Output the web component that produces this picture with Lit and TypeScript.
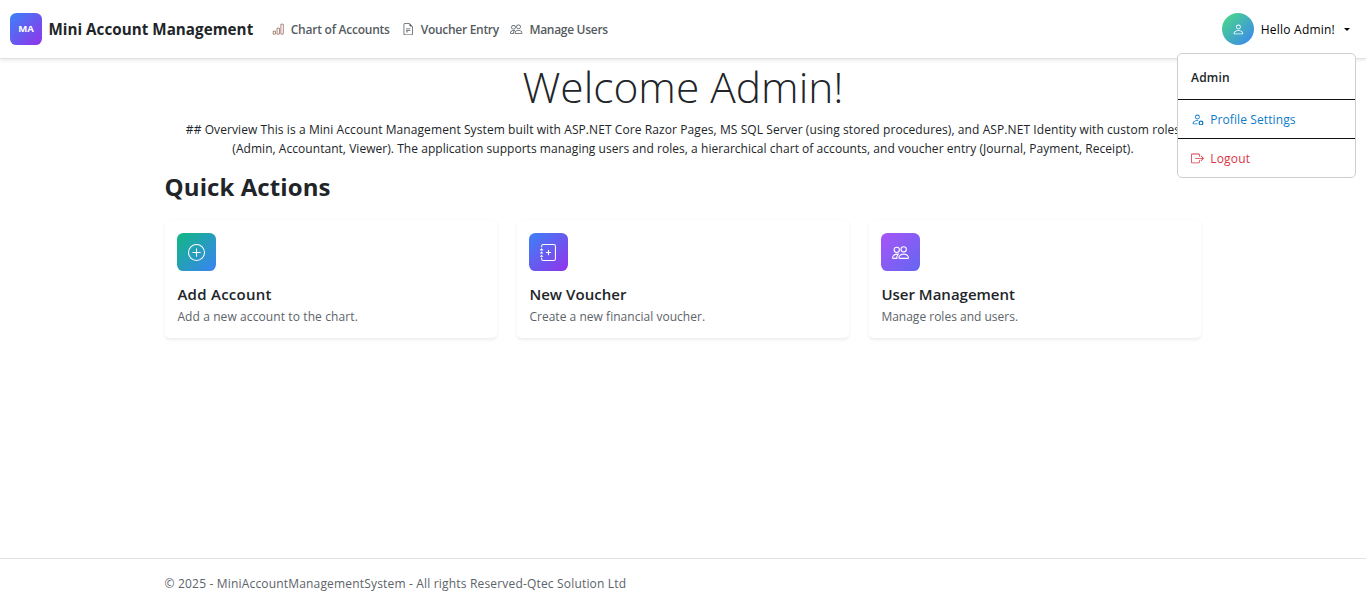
import { LitElement, html, css, svg } from "lit";
import { customElement, property } from "lit/decorators.js";

const ICONS: Record<string, string[]> = {
  chart: ["M4 11H2v3h2zm5-4H7v7h2zm5-5v12h-2V2zm-2-1a1 1 0 0 0-1 1v12a1 1 0 0 0 1 1h2a1 1 0 0 0 1-1V2a1 1 0 0 0-1-1zM6 7a1 1 0 0 1 1-1h2a1 1 0 0 1 1 1v7a1 1 0 0 1-1 1H7a1 1 0 0 1-1-1zm-5 4a1 1 0 0 1 1-1h2a1 1 0 0 1 1 1v3a1 1 0 0 1-1 1H2a1 1 0 0 1-1-1z"],
  file: [
    "M5.5 7a.5.5 0 0 0 0 1h5a.5.5 0 0 0 0-1zM5 9.5a.5.5 0 0 1 .5-.5h5a.5.5 0 0 1 0 1h-5a.5.5 0 0 1-.5-.5m0 2a.5.5 0 0 1 .5-.5h2a.5.5 0 0 1 0 1h-2a.5.5 0 0 1-.5-.5",
    "M9.5 0H4a2 2 0 0 0-2 2v12a2 2 0 0 0 2 2h8a2 2 0 0 0 2-2V4.500zm0 1v2A1.5 1.5 0 0 0 11 4.500h2V14a1 1 0 0 1-1 1H4a1 1 0 0 1-1-1V2a1 1 0 0 1 1-1z",
  ],
  people: ["M15 14s1 0 1-1-1-4-5-4-5 3-5 4 1 1 1 1zm-7.978-1L7 12.996c.001-.264.167-1.03.76-1.72C8.312 10.629 9.282 10 11 10c1.717 0 2.687.63 3.24 1.276.593.69.758 1.457.76 1.72l-.008.002-.014.002zM11 7a2 2 0 1 0 0-4 2 2 0 0 0 0 4m3-2a3 3 0 1 1-6 0 3 3 0 0 1 6 0M6.936 9.28a6 6 0 0 0-1.23-.247A7 7 0 0 0 5 9c-4 0-5 3-5 4q0 1 1 1h4.216A2.24 2.24 0 0 1 5 13c0-1.01.377-2.042 1.09-2.904.243-.294.526-.569.846-.816M4.92 10A5.5 5.5 0 0 0 4 13H1c0-.26.164-1.03.76-1.724.545-.636 1.492-1.256 3.16-1.275ZM1.5 5.500a3 3 0 1 1 6 0 3 3 0 0 1-6 0m3-2a2 2 0 1 0 0 4 2 2 0 0 0 0-4"],
  person: ["M8 8a3 3 0 1 0 0-6 3 3 0 0 0 0 6m2-3a2 2 0 1 1-4 0 2 2 0 0 1 4 0m4 8c0 1-1 1-1 1H3s-1 0-1-1 1-4 6-4 6 3 6 4m-1-.004c-.001-.246-.154-.986-.832-1.664C11.516 10.68 10.289 10 8 10s-3.516.68-4.168 1.332c-.678.678-.83 1.418-.832 1.664z"],
  gear: ["M11 5a3 3 0 1 1-6 0 3 3 0 0 1 6 0M8 7a2 2 0 1 0 0-4 2 2 0 0 0 0 4m.256 7a4.500 4.500 0 0 1-.229-1.004H3c.001-.246.154-.986.832-1.664C4.484 10.68 5.711 10 8 10q.39 0 .74.025c.226-.341.496-.65.804-.918Q8.844 9.002 8 9c-5 0-6 3-6 4s1 1 1 1zm3.630-4.540c.18-.613 1.048-.613 1.229 0l.043.148a.64.64 0 0 0 .921.382l.136-.074c.561-.306 1.175.308.87.869l-.075.136a.64.64 0 0 0 .382.92l.149.045c.612.18.612 1.048 0 1.229l-.15.043a.64.64 0 0 0-.38.921l.074.136c.305.561-.309 1.175-.87.87l-.136-.075a.64.64 0 0 0-.92.382l-.045.149c-.18.612-1.048.612-1.229 0l-.043-.15a.64.64 0 0 0-.921-.38l-.136.074c-.561.305-1.175-.309-.87-.87l.075-.136a.64.64 0 0 0-.382-.92l-.148-.045c-.613-.18-.613-1.048 0-1.229l.148-.043a.64.64 0 0 0 .382-.921l-.074-.136c-.306-.561.308-1.175.869-.87l.136.075a.64.64 0 0 0 .92-.382zM14 12.500a1.500 1.500 0 1 0-3 0 1.500 1.500 0 0 0 3 0"],
  logout: [
    "M10 12.5a.5.5 0 0 1-.5.5h-8a.5.5 0 0 1-.5-.5v-9a.5.5 0 0 1 .5-.5h8a.5.5 0 0 1 .5.5v2a.5.5 0 0 0 1 0v-2A1.5 1.5 0 0 0 9.5 2h-8A1.5 1.5 0 0 0 0 3.5v9A1.5 1.5 0 0 0 1.5 14h8a1.5 1.5 0 0 0 1.5-1.5v-2a.5.5 0 0 0-1 0z",
    "M15.854 8.354a.5.5 0 0 0 0-.708l-3-3a.5.5 0 0 0-.708.708L14.293 7.5H5.5a.5.5 0 0 0 0 1h8.793l-2.147 2.146a.5.5 0 0 0 .708.708z",
  ],
  plus: [
    "M8 15A7 7 0 1 1 8 1a7 7 0 0 1 0 14m0 1A8 8 0 1 0 8 0a8 8 0 0 0 0 16",
    "M8 4a.5.5 0 0 1 .5.5v3h3a.5.5 0 0 1 0 1h-3v3a.5.5 0 0 1-1 0v-3h-3a.5.5 0 0 1 0-1h3v-3A.5.5 0 0 1 8 4",
  ],
  journal: [
    "M8 5.5a.5.5 0 0 1 .5.5v1.5H10a.5.5 0 0 1 0 1H8.5V10a.5.5 0 0 1-1 0V8.5H6a.5.5 0 0 1 0-1h1.5V6a.5.5 0 0 1 .5-.5",
    "M3 0h10a2 2 0 0 1 2 2v12a2 2 0 0 1-2 2H3a2 2 0 0 1-2-2v-1h1v1a1 1 0 0 0 1 1h10a1 1 0 0 0 1-1V2a1 1 0 0 0-1-1H3a1 1 0 0 0-1 1v1H1V2a2 2 0 0 1 2-2",
    "M1 5v-.5a.5.5 0 0 1 1 0V5h.5a.5.5 0 0 1 0 1h-2a.5.5 0 0 1 0-1zm0 3v-.5a.5.5 0 0 1 1 0V8h.5a.5.5 0 0 1 0 1h-2a.5.5 0 0 1 0-1zm0 3v-.5a.5.5 0 0 1 1 0v.5h.5a.5.5 0 0 1 0 1h-2a.5.5 0 0 1 0-1z",
  ],
};

@customElement("app-icon")
class AppIcon extends LitElement {
  @property() name = "";
  static styles = css`
    :host { display: block; flex: none; width: 12.8px; height: 12.8px; }
    svg { display: block; width: 100%; height: 100%; }
  `;
  render() {
    return html`<svg viewBox="0 0 16 16" fill="currentColor" aria-hidden="true">
      ${(ICONS[this.name] ?? []).map((d) => svg`<path d=${d}></path>`)}
    </svg>`;
  }
}

@customElement("app-root")
class AppRoot extends LitElement {
  static styles = css`
    :host {
      display: flex; flex-direction: column; height: 605px; overflow: hidden;
      background: #fff; color: #212529;
      font: 400 12px/19.2px "Open Sans", "Noto Sans", sans-serif;
    }
    .t { white-space: nowrap; }
    .navbar {
      position: relative; z-index: 2; flex: none; box-sizing: border-box; height: 59px;
      display: flex; align-items: center; padding: 0 16px 0 10px;
      border-bottom: 1px solid #dee2e6; background: #fff;
      box-shadow: 0 2px 3px rgba(0, 0, 0, 0.07);
    }
    .logo {
      width: 32px; height: 32px; border-radius: 6.4px; display: grid; place-items: center;
      background: linear-gradient(135deg, #3b82f6, #9333ea);
      color: #fff; font-size: 9.6px; font-weight: 700; line-height: 1;
    }
    .brand { margin-left: 6.4px; font-size: 15.200px; font-weight: 700; padding-top: 1px; letter-spacing: 0.03px; }
    .links { display: flex; margin-left: 18.500px; }
    .link { display: flex; align-items: center; gap: 6.600px; color: #555b61; font-weight: 600; letter-spacing: -0.24px; }
    .link .t { padding-top: 2px; }
    .link app-icon { width: 12.400px; height: 12.400px; }
    .accounts { width: 130px; }
    .accounts app-icon { color: #96645c; }
    .voucher { width: 108.700px; letter-spacing: -0.29px; }
    .users { letter-spacing: -0.3px; }
    .user { margin-left: auto; display: flex; align-items: center; color: #000; letter-spacing: 0.22px; }
    .user .t { padding-top: 1px; }
    .avatar {
      width: 32px; height: 32px; border-radius: 50%; display: grid; place-items: center;
      background: linear-gradient(135deg, #4ade80, #3b82f6); color: #fff; margin-right: 6.4px;
    }
    .caret { margin-left: 9px; border: 3.6px solid transparent; border-top-color: #000; border-bottom: 0; }
    .menu {
      position: absolute; top: 53px; right: 10px; width: 179px; height: 125px; box-sizing: border-box;
      display: flex; flex-direction: column; background: #fff;
      border: 1px solid #ccced0; border-radius: 5px;
    }
    .item { display: flex; align-items: center; gap: 6.4px; height: 38px; padding: 0 13px; letter-spacing: 0.1px; }
    .item .t { padding-top: 2px; }
    .item + .item { border-top: 1px solid #111; }
    .head { height: 45px; font-weight: 600; padding-top: 1px; box-sizing: border-box; letter-spacing: 0.2px; }
    .profile { color: #0d7bc8; }
    .logout { color: #dc3545; letter-spacing: 0.2px; }
    main { flex: 1; width: 1036.8px; margin: 0 auto; }
    h1 { margin: 7px 0 0; font-size: 42.500px; line-height: 42px; font-weight: 300; text-align: center; }
    .overview { margin: 12px 0 0; text-align: center; }
    .first { letter-spacing: 0.083px; }
    .second { letter-spacing: 0.04px; }
    h2 { margin: 11px 0 0; font-size: 24px; line-height: 36px; font-weight: 700; letter-spacing: 0.08px; }
    .cards { display: grid; grid-template-columns: repeat(3, 1fr); gap: 19.2px; margin-top: 15px; }
    .card { height: 118px; box-sizing: border-box; padding: 12.8px; border-radius: 5px; box-shadow: 0 1.6px 3.2px rgba(0, 0, 0, 0.075); }
    .tile { width: 38.4px; height: 38px; border-radius: 6.4px; display: grid; place-items: center; color: #fff; }
    .tile app-icon { width: 17px; height: 17px; }
    .green { background: linear-gradient(135deg, #10b981, #3b82f6); }
    .blue { background: linear-gradient(135deg, #3b82f6, #9333ea); }
    .purple { background: linear-gradient(135deg, #a855f7, #6366f1); }
    h3 { margin: 13px 0 0; font-size: 15px; line-height: 20px; font-weight: 600; }
    .desc { margin: 3px 0 0; color: #5c6369; }
    .green ~ h3 { letter-spacing: 0.27px; }
    .green ~ .desc { letter-spacing: 0.1px; }
    .blue ~ h3 { letter-spacing: 0.05px; }
    .blue ~ .desc { letter-spacing: 0.03px; }
    footer { flex: none; box-sizing: border-box; height: 47px; border-top: 1px solid #dee2e6; }
    .foot { width: 1036.8px; margin: 0 auto; line-height: 50px; height: 46px; color: #5c6369; letter-spacing: 0.175px; }
  `;
  card(icon: string, tone: string, title: string, text: string) {
    return html`<div class="card">
      <div class="tile ${tone}"><app-icon name=${icon}></app-icon></div>
      <h3><span class="t">${title}</span></h3>
      <p class="desc"><span class="t">${text}</span></p>
    </div>`;
  }
  render() {
    return html`
      <header class="navbar">
        <div class="logo"><span class="t">MA</span></div>
        <div class="brand"><span class="t">Mini Account Management</span></div>
        <nav class="links">
          <a class="link accounts"><app-icon name="chart"></app-icon><span class="t">Chart of Accounts</span></a>
          <a class="link voucher"><app-icon name="file"></app-icon><span class="t">Voucher Entry</span></a>
          <a class="link users"><app-icon name="people"></app-icon><span class="t">Manage Users</span></a>
        </nav>
        <div class="user"><div class="avatar"><app-icon name="person"></app-icon></div><span class="t">Hello Admin!</span><i class="caret"></i></div>
        <div class="menu">
          <div class="item head"><span class="t">Admin</span></div>
          <div class="item profile"><app-icon name="gear"></app-icon><span class="t">Profile Settings</span></div>
          <div class="item logout"><app-icon name="logout"></app-icon><span class="t">Logout</span></div>
        </div>
      </header>
      <main>
        <h1><span class="t">Welcome Admin!</span></h1>
        <p class="overview"><span class="t first">## Overview This is a Mini Account Management System built with ASP.NET Core Razor Pages, MS SQL Server (using stored procedures), and ASP.NET Identity with custom roles</span><br><span class="t second">(Admin, Accountant, Viewer). The application supports managing users and roles, a hierarchical chart of accounts, and voucher entry (Journal, Payment, Receipt).</span></p>
        <h2><span class="t">Quick Actions</span></h2>
        <section class="cards">
          ${this.card("plus", "green", "Add Account", "Add a new account to the chart.")}
          ${this.card("journal", "blue", "New Voucher", "Create a new financial voucher.")}
          ${this.card("people", "purple", "User Management", "Manage roles and users.")}
        </section>
      </main>
      <footer><div class="foot"><span class="t">© 2025 - MiniAccountManagementSystem - All rights Reserved-Qtec Solution Ltd</span></div></footer>
    `;
  }
}
